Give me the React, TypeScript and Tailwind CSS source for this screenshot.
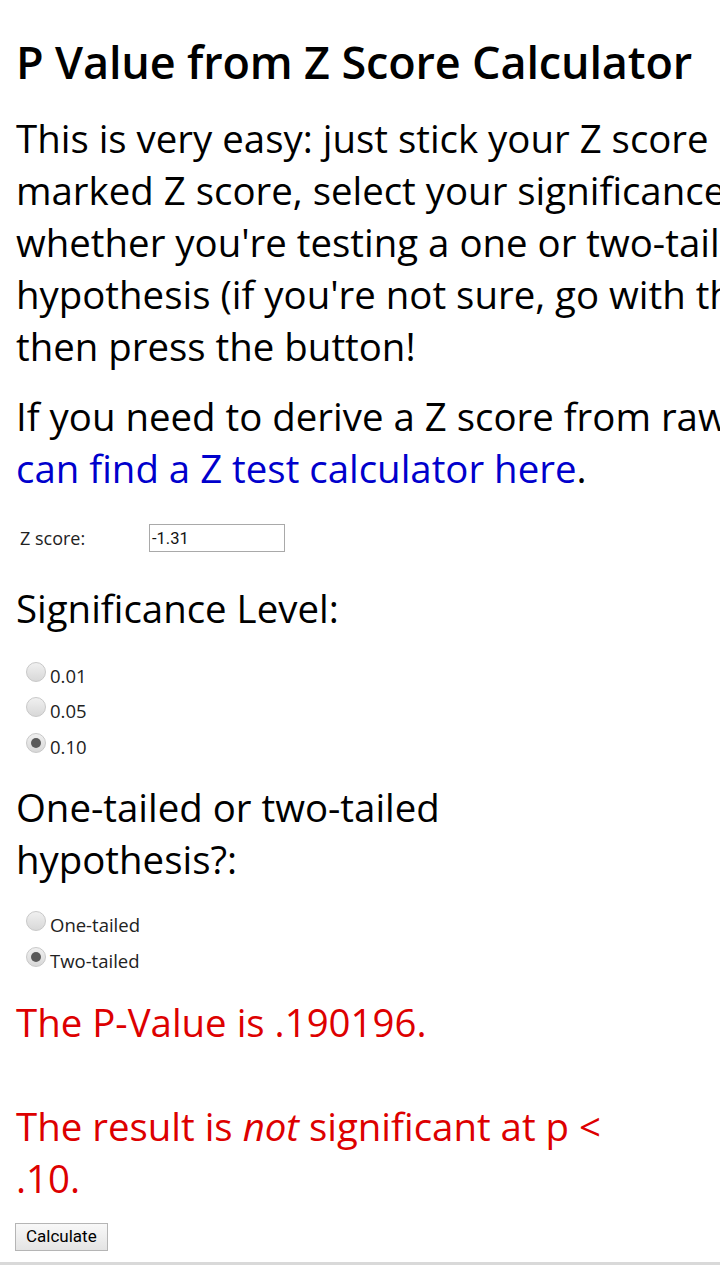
import React from "react";

const body = { fontFamily: '"Open Sans", "Liberation Sans", sans-serif' };

function Radio({ checked, label }: { checked?: boolean; label: string }) {
  return (
    <div className="flex items-end h-[35.5px] pl-[10px]">
      <span className="relative w-[20px] h-[20px] rounded-full border border-[#c8c8c8] bg-[linear-gradient(#f0f0f0,#d8d8d8)] mb-[6px] flex items-center justify-center">
        {checked && <span className="w-[10px] h-[10px] rounded-full bg-[#5a5a5a]" />}
      </span>
      <span className="ml-[4px] text-[18.5px] leading-[24px] text-[#222]">{label}</span>
    </div>
  );
}

export default function App() {
  return (
    <div className="w-[720px] h-[1266px] overflow-hidden bg-white text-black relative" style={body}>
      <div className="pl-[16px]">
        <h1 className="text-[45px] font-semibold leading-[52px] pt-[36px] whitespace-nowrap tracking-[-0.15px]">
          P Value from Z Score Calculator
        </h1>
        <div className="text-[38.4px] leading-[52px] mt-[24px] whitespace-nowrap">
          <div>This is very easy: just stick your Z score into the box</div>
          <div>marked Z score, select your significance level and</div>
          <div>whether you're testing a one or two-tailed</div>
          <div>hypothesis (if you're not sure, go with the default),</div>
          <div>then press the button!</div>
        </div>
        <div className="text-[38.4px] leading-[52px] mt-[18px] whitespace-nowrap">
          <div>If you need to derive a Z score from raw data, you</div>
          <div>
            <a className="text-[#0000cc]">can find a Z test calculator here</a>.
          </div>
        </div>
        <div className="flex items-center mt-[30px] h-[28px]">
          <span className="w-[133px] pl-[4px] text-[18px] text-[#222]">Z score:</span>
          <div
            className="w-[136px] h-[28px] border border-[#a9a9a9] flex items-center pl-[2px] pt-[3px] text-[16.5px] text-[#111]"
            style={{ fontFamily: 'Roboto, "Liberation Sans", sans-serif' }}
          >
            -1.31
          </div>
        </div>
        <div className="text-[38.4px] leading-[52px] mt-[30px]">Significance Level:</div>
        <div className="mt-[18px]">
          <Radio label="0.01" />
          <Radio label="0.05" />
          <Radio label="0.10" checked />
        </div>
        <div className="text-[38.4px] leading-[52px] mt-[22px]">
          <div>One-tailed or two-tailed</div>
          <div>hypothesis?:</div>
        </div>
        <div className="mt-[17px]">
          <Radio label="One-tailed" />
          <Radio label="Two-tailed" checked />
        </div>
        <div className="text-[38.4px] leading-[52px] text-[#dd0000] mt-[23px] whitespace-nowrap">
          <div>The P-Value is .190196.</div>
          <div className="h-[52px]" />
          <div>
            The result is <i>not</i> significant at p &lt;
          </div>
          <div>.10.</div>
        </div>
        <button
          className="mt-[19px] ml-[-1px] h-[28px] px-[10px] border border-[#b5b5b5] bg-[linear-gradient(#f8f8f8,#e4e4e4)] text-[17px] text-black"
          style={{ fontFamily: 'Roboto, "Liberation Sans", sans-serif' }}
        >
          Calculate
        </button>
      </div>
      <div className="absolute left-0 right-0 top-[1262px] h-[3px] bg-[#d9d9d9]" />
    </div>
  );
}
